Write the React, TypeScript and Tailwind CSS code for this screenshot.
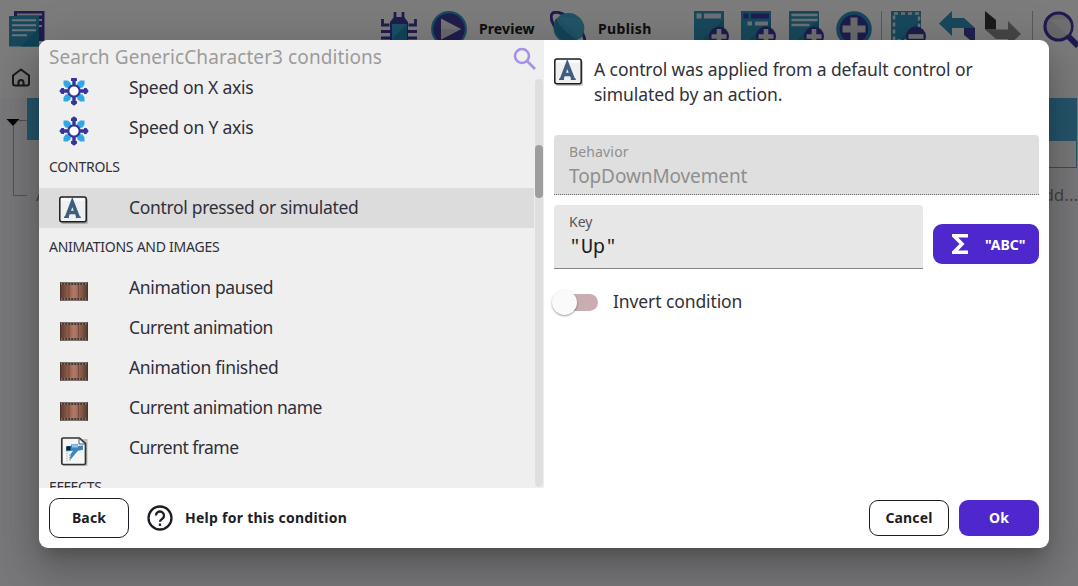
import type { ReactNode } from 'react';

const TEAL = '#3090b8';
const NAVY = '#40389c';

function PagesIcon() {
  return (
    <svg width="36" height="36" viewBox="0 0 36 36">
      <path d="M5 0h30.500v30H5z" fill={NAVY} />
      <path d="M8 3.500h25M30 9h3M30 15h3" stroke="#d8dce8" strokeWidth="2" />
      <path d="M0 5h30v30.500H0z" fill={TEAL} />
      <path d="M30 17v18.500H12z" fill="#1f86aa" />
      <path d="M3 9.200h24M3 14.200h24M3 19.200h24M3 24.200h15" stroke="#d8ecf4" strokeWidth="2" />
    </svg>
  );
}

function BugIcon() {
  return (
    <svg width="36" height="36" viewBox="0 0 36 36">
      <path
        d="M14 1v6M22 1v6M1.500 8v6h7M34.500 8v6h-7M0 20.500h9M27 20.500h9M0 27h9M27 27h9"
        fill="none"
        stroke={NAVY}
        strokeWidth="2.800"
      />
      <path d="M13 6h10l4 5H9z" fill={NAVY} />
      <path d="M9 11h18v22H9z" fill={NAVY} />
      <path d="M11 13h15v20H11z" fill="#36a0ca" />
      <path d="M26 13v20L11 28z" fill="#2788b0" />
    </svg>
  );
}

function PlayIcon() {
  return (
    <svg width="36" height="36" viewBox="0 0 36 36">
      <circle cx="18" cy="18" r="16.800" fill={NAVY} stroke="#3096c0" strokeWidth="2.200" />
      <path d="M10 7.500v21L30 18z" fill="#e6e6ea" />
      <path d="M10 18v10.500L30 18z" fill="#d2d2d6" />
    </svg>
  );
}

function PlanetIcon() {
  return (
    <svg width="36" height="36" viewBox="0 0 36 36">
      <ellipse cx="18" cy="18" rx="22" ry="9" transform="rotate(45 18 18)" fill="none" stroke={NAVY} strokeWidth="3" />
      <circle cx="18.500" cy="17" r="15" fill="#3aa2ca" />
      <path d="M8 6L30 28A15 15 0 0 0 29 6z" fill="#46a8cc" />
      <path d="M6 7Q9 17 28 30Q20 34 12 29Q0 20 6 7z" fill="#2a86b0" />
    </svg>
  );
}

function CardIcon({ kind }: { kind: 'event' | 'sub' | 'comment' | 'select' }) {
  return (
    <svg width="36" height="36" viewBox="0 0 36 36">
      <path d="M0 0h30v32H0z" fill={TEAL} />
      <path d="M30 8v24H5z" fill="#2383a8" />
      {kind === 'event' && <path d="M2.500 2.500h5v5h-5zM10 2.500h17v5H10z" fill="#d8e3ea" />}
      {kind === 'sub' && (
        <>
          <path d="M2.500 2.500h5v5h-5zM10 2.500h18v5H10z" fill="#3b3ba0" />
          <path d="M6.500 10.500h4.500v4H6.500zM14 10.500h13v4H14z" fill="#d8e3ea" />
        </>
      )}
      {kind === 'comment' && <path d="M2.500 4h26M2.500 9h26M2.500 14h18" stroke="#d8e3ea" strokeWidth="2.300" />}
      {kind === 'select' && (
        <path d="M3 2.500h25v27H3z" fill="none" stroke="#d8e3ea" strokeWidth="2.500" strokeDasharray="4 3" />
      )}
      <circle cx="25" cy="25.500" r="10" fill="#3b3b98" />
      <path d={kind === 'select' ? 'M17.500 25.500h15' : 'M17.500 25.500h15M25 18v15'} stroke="#e0e0e8" strokeWidth="4.600" />
    </svg>
  );
}

function PlusIcon() {
  return (
    <svg width="36" height="36" viewBox="0 0 36 36">
      <circle cx="18" cy="18" r="16" fill="#3b3b9c" stroke="#2e8db8" strokeWidth="3.500" />
      <path d="M6.500 18h23M18 6.500v23" stroke="#d9d9df" strokeWidth="7" />
    </svg>
  );
}

function UndoIcon() {
  return (
    <svg width="36" height="36" viewBox="0 0 36 36">
      <path d="M0 12.500L13 0v7h12l11 10H13v8z" fill={TEAL} />
      <path d="M25 17h11v16l-11-9z" fill="#4540a0" />
    </svg>
  );
}

function RedoIcon() {
  return (
    <svg width="36" height="36" viewBox="0 0 36 36">
      <path d="M0 0l11 9v9.500H0z" fill="#36363a" />
      <path d="M0 18.500h23V10l13 13-13 12v-7H11z" fill="#8c8c8c" />
    </svg>
  );
}

function SearchToolIcon() {
  return (
    <svg width="38" height="38" viewBox="0 0 38 38">
      <path d="M25 25l10 10" stroke="#3f35a0" strokeWidth="6" />
      <circle cx="15.500" cy="15.500" r="13.500" fill="#d0d0d4" stroke="#3f35a0" strokeWidth="3.200" />
      <path d="M7 9l18 15A12 12 0 0 0 25 8z" fill="#dedee2" />
    </svg>
  );
}

function SpeedIcon() {
  return (
    <svg width="30" height="30" viewBox="0 0 30 30">
      <path d="M6.500 6.500l17 17M23.500 6.500l-17 17" stroke="#2fa8e3" strokeWidth="5" />
      <path
        d="M4.500 4.500h4L12 7l-5 5-2.500-3.500zM25.500 4.500h-4L18 7l5 5 2.500-3.500zM4.500 25.500h4L12 23l-5-5-2.500 3.500zM25.500 25.500h-4L18 23l5-5 2.500 3.500z"
        fill="#2fa8e3"
      />
      <path d="M15 3v24M3 15h24" stroke="#35359a" strokeWidth="3.400" />
      <path
        d="M15 .3l3 2.200v2.500h-6V2.500zM15 29.700l3-2.200v-2.500h-6v2.500zM.3 15l2.200-3h2.500v6H2.500zM29.700 15l-2.200-3h-2.500v6h2.500z"
        fill="#35359a"
      />
      <circle cx="15" cy="15" r="5.700" fill="#fff" stroke="#35359a" strokeWidth="2.200" />
    </svg>
  );
}

function KeyIcon() {
  return (
    <svg width="30" height="30" viewBox="0 0 30 30">
      <rect x="2" y="2.500" width="27" height="25.500" rx="2" fill="#000" opacity=".22" />
      <rect x=".8" y=".9" width="26.400" height="24.800" rx="2" fill="#eef0f2" stroke="#1b1d20" strokeWidth="1.500" />
      <path d="M2.500 2.500h23v2h-23z" fill="#fff" />
      <path d="M7.500 21.500L13.300 6L19.300 21.500M9.500 16.500h7.600" fill="none" stroke="#3f5e7e" strokeWidth="3.600" />
      <path d="M5 21.300h5M16.800 21.300h5" stroke="#3f5e7e" strokeWidth="1.600" />
    </svg>
  );
}

function FilmIcon() {
  return (
    <svg width="30" height="30" viewBox="0 0 30 30">
      <defs>
        <linearGradient id="film" x1="0" x2="1">
          <stop offset="0" stopColor="#5a3a30" />
          <stop offset=".3" stopColor="#8f5e4c" />
          <stop offset=".5" stopColor="#b67a66" />
          <stop offset=".72" stopColor="#8f5e4c" />
          <stop offset="1" stopColor="#4c3a30" />
        </linearGradient>
      </defs>
      <path d="M1 6.500h28v18H1z" fill="url(#film)" />
      <path d="M1 7.700h28M1 23.300h28" stroke="#46392f" strokeWidth="2.400" />
      <path d="M2 8h27M2 23h27" stroke="#b5aba4" strokeWidth="1.100" strokeDasharray="1.300 1.700" />
      <path d="M10 9v12.500M19.500 9v12.500" stroke="#6a4438" strokeWidth=".8" />
      <path d="M1.500 6.500v18M28.500 6.500v18" stroke="#4a342c" />
    </svg>
  );
}

function FrameIcon() {
  return (
    <svg width="30" height="30" viewBox="0 0 30 30">
      <path d="M4 3h24.500v27H4z" fill="#000" opacity=".2" />
      <path
        d="M4.300 2h16.200l6 5.500v19.500q0 1.500-1.500 1.500H4.300q-1.500 0-1.500-1.500V3.500Q2.800 2 4.300 2z"
        fill="#f5f6f6"
        stroke="#303234"
        strokeWidth="1.700"
      />
      <path d="M20 2.500v5.500h6z" fill="#fff" stroke="#55585b" strokeWidth="1" />
      <path d="M7 10.500l5-.5V8.500l7-.5v2l5-.6v4.300l-5 1-3.500 4-4.500 5.500.5-6 2.500-3.500-7 .8z" fill="#3d86ba" />
      <path d="M13 8.500h6v3h-6z" fill="#8ec4e8" />
      <path d="M7.500 10.200h4v4h-4z" fill="#0d2234" />
      <path d="M8 17v9M10.500 18.500v7" stroke="#9aa0a4" strokeWidth="1" strokeDasharray="1.200 1.200" />
    </svg>
  );
}

type IconKind = 'speed' | 'key' | 'film' | 'frame';

const icons: Record<IconKind, () => ReactNode> = {
  speed: SpeedIcon,
  key: KeyIcon,
  film: FilmIcon,
  frame: FrameIcon,
};

interface ItemProps {
  icon: IconKind;
  label: string;
  selected?: boolean;
  tracking?: string;
}

function Item({ icon, label, selected, tracking = 'tracking-[-0.32px]' }: ItemProps) {
  const Icon = icons[icon];
  return (
    <li className={selected ? 'flex h-10 shrink-0 bg-[#dcdcdc] pl-5' : 'flex h-10 shrink-0 pl-5'}>
      <span className="w-[70px] pt-2">
        <Icon />
      </span>
      <span className={`text-[17.500px] leading-[39px] ${tracking}`}>{label}</span>
    </li>
  );
}

function Heading({ children }: { children: ReactNode }) {
  return <li className="h-10 shrink-0 pl-2.5 text-[14px] leading-[38px] tracking-[-0.25px]">{children}</li>;
}

function Editor() {
  return (
    <div className="flex h-full flex-col bg-[#f0f0f4]">
      <header className="flex h-14 bg-[#f8f8f8] pt-[11px]">
        <div className="ml-[9px] w-[371px]">
          <PagesIcon />
        </div>
        <div className="flex w-[313px] text-[14px] leading-[36px] font-bold text-[#202020]">
          <div className="w-[51px] pl-px"><BugIcon /></div>
          <PlayIcon />
          <span className="ml-3 w-[71px] tracking-[0.1px]">Preview</span>
          <PlanetIcon />
          <span className="ml-3 tracking-[0.35px]">Publish</span>
        </div>
        <div className="flex">
          <div className="ml-px w-[47px]"><CardIcon kind="event" /></div>
          <div className="w-12"><CardIcon kind="sub" /></div>
          <div className="w-[47px]"><CardIcon kind="comment" /></div>
          <div className="w-[46px] border-r border-[#b0b0b0]"><PlusIcon /></div>
          <div className="ml-[9px] w-12"><CardIcon kind="select" /></div>
          <div className="w-[46px]"><UndoIcon /></div>
          <div className="w-[48px] border-r border-[#b0b0b0]"><RedoIcon /></div>
          <div className="ml-2.5 w-[35px] overflow-hidden"><SearchToolIcon /></div>
        </div>
      </header>
      <div className="flex h-[42px] items-center bg-[#f6f6f6] pt-0.5 pl-3">
        <svg width="18" height="20" viewBox="0 0 18 20" fill="none" stroke="#303030" strokeWidth="2" strokeLinejoin="round">
          <path d="M1 7.500L9 1.500l8 6v8q0 2-2 2H3q-2 0-2-2z" />
          <path d="M6.500 17.500v-3a2.500 2.500 0 0 1 5 0v3" />
        </svg>
      </div>
      <div className="flex">
        <svg width="27" height="104" viewBox="0 0 27 104">
          <path d="M13.500 28v69.500H27M19 22.500h8" fill="none" stroke="#a4a4a8" />
          <path d="M6.500 21h13l-6.500 7z" fill="#050505" />
        </svg>
        <div className="flex w-[1050px] flex-col">
          <div className="h-[42px] bg-[#4aa8d4]" />
          <div className="ml-10 h-7 border border-[#4aa8d4] bg-[#f3f3f3]" />
          <div className="flex h-[50px] justify-between pl-[9px] text-[17px] leading-[54px] text-[#888]">
            <span>Add condition</span>
            <span className="-mr-px">Add...</span>
          </div>
        </div>
      </div>
    </div>
  );
}

export default function App() {
  return (
    <div className="relative h-[586px] w-[1078px] overflow-hidden font-['Noto_Sans',sans-serif] text-[#30303a]">
      <Editor />
      <div className="absolute inset-0 bg-black/50 px-[39px] pt-10">
        <div className="flex h-[508px] w-[1010px] flex-col overflow-hidden rounded-[9px] bg-white shadow-[0_11px_15px_-7px_rgba(0,0,0,0.2),0_24px_38px_3px_rgba(0,0,0,0.14),0_9px_46px_8px_rgba(0,0,0,0.12)]">
          <div className="flex h-[448px]">
            <section className="flex w-[505px] flex-col bg-[#efefef]">
              <div className="flex h-[38px] items-start justify-between pr-2 pl-2.5">
                <span className="text-[19px] leading-[34px] tracking-[0.09px] text-[#9b9b9b]">
                  Search GenericCharacter3 conditions
                </span>
                <svg className="mt-[7px]" width="23" height="23" viewBox="0 0 23 23" fill="none" stroke="#a790ea" strokeWidth="2.600">
                  <circle cx="9" cy="9" r="7" />
                  <path d="M14 14l8 8" />
                </svg>
              </div>
              <div className="flex h-[410px]">
                <ul className="flex w-[495px] flex-col overflow-hidden">
                  <li className="-mt-2.5 h-0 shrink-0" />
                  <Item icon="speed" label="Speed on X axis" tracking="tracking-[-0.25px]" />
                  <Item icon="speed" label="Speed on Y axis" tracking="tracking-[-0.22px]" />
                  <Heading>CONTROLS</Heading>
                  <Item icon="key" label="Control pressed or simulated" selected />
                  <Heading>ANIMATIONS AND IMAGES</Heading>
                  <Item icon="film" label="Animation paused" tracking="tracking-[-0.36px]" />
                  <Item icon="film" label="Current animation" tracking="tracking-[-0.42px]" />
                  <Item icon="film" label="Animation finished" />
                  <Item icon="film" label="Current animation name" tracking="tracking-[-0.43px]" />
                  <Item icon="frame" label="Current frame" tracking="tracking-[-0.54px]" />
                  <Heading>EFFECTS</Heading>
                </ul>
                <div className="mt-px ml-px h-[408px] w-2 rounded bg-[#dfdfdf] pt-[66px]">
                  <div className="h-[53px] rounded bg-[#9e9e9e]" />
                </div>
              </div>
            </section>
            <section className="flex w-[505px] flex-col pr-2.5 pl-2.5">
              <div className="flex h-[95px] pt-[17px]">
                <div className="w-10 pt-px"><KeyIcon /></div>
                <p className="w-[400px] text-[17.500px] leading-[25px] tracking-[-0.08px]">
                  A control was applied from a default control or simulated by an action.
                </p>
              </div>
              <div className="h-[60px] rounded-t border-b border-dotted border-[#6a6a6a] bg-[#dfdfdf] px-[15px] pt-[7px] text-[#8f8f8f]">
                <div className="text-[14px] leading-5 tracking-[0.15px]">Behavior</div>
                <div className="text-[19px] leading-7 tracking-[-0.1px]">TopDownMovement</div>
              </div>
              <div className="mt-2.5 flex">
                <div className="h-16 w-[369px] rounded-t border-b border-[#858585] bg-[#e7e7e7] px-[15px] pt-[7px]">
                  <div className="text-[14px] leading-5 text-[#55555c]">Key</div>
                  <div className="font-['Noto_Sans_Mono','DejaVu_Sans_Mono',monospace] text-[20px] leading-7 text-[#1d1d26]">"Up"</div>
                </div>
                <button className="mt-[19px] ml-2.5 flex h-10 w-[106px] items-center rounded-[9px] bg-[#4f28cd] pl-[19px] text-[14px] font-bold text-white">
                  <svg width="16" height="20" viewBox="0 0 16 20">
                    <path d="M0 0h16v3.500H6.200l6.300 6.500-6.300 6.500H16V20H0v-2.500L7.500 10 0 2.500z" fill="#fff" />
                  </svg>
                  <span className="ml-[17px]">"ABC"</span>
                </button>
              </div>
              <div className="mt-[19px] flex h-7 items-center">
                <div className="flex h-[17px] w-11 items-center rounded-full bg-[#c9adb0]">
                  <div className="-ml-0.5 h-[25px] w-[25px] shrink-0 rounded-full bg-[#fafafa] shadow-[0_1px_2px_rgba(0,0,0,0.4)]" />
                </div>
                <span className="-mt-0.5 ml-[15px] text-[17.500px] leading-7 tracking-[-0.1px]">Invert condition</span>
              </div>
            </section>
          </div>
          <footer className="flex h-[60px] items-center px-2.5 text-[14px] font-bold text-[#1d1d26]">
            <button className="h-10 w-20 rounded-[10px] border border-[#1d1d26] pb-0.5 tracking-[0.15px]">Back</button>
            <svg className="ml-[18px]" width="26" height="26" viewBox="0 0 26 26" fill="none" stroke="#1d1d26" strokeWidth="2.300">
              <circle cx="13" cy="13" r="11.500" />
              <path d="M9 10.500a4 4 0 1 1 6.300 3.300c-1.500 1.100-2.300 1.500-2.300 3" />
              <path d="M13 18.500v2.400" />
            </svg>
            <span className="ml-[12px] pb-0.5 tracking-[0.26px]">Help for this condition</span>
            <button className="ml-auto h-9 w-20 rounded-[9px] border border-[#1d1d26] pb-0.5 tracking-[0.15px]">Cancel</button>
            <button className="ml-2.5 h-9 w-20 rounded-[9px] bg-[#4f28cd] pb-0.5 text-white">Ok</button>
          </footer>
        </div>
      </div>
    </div>
  );
}
